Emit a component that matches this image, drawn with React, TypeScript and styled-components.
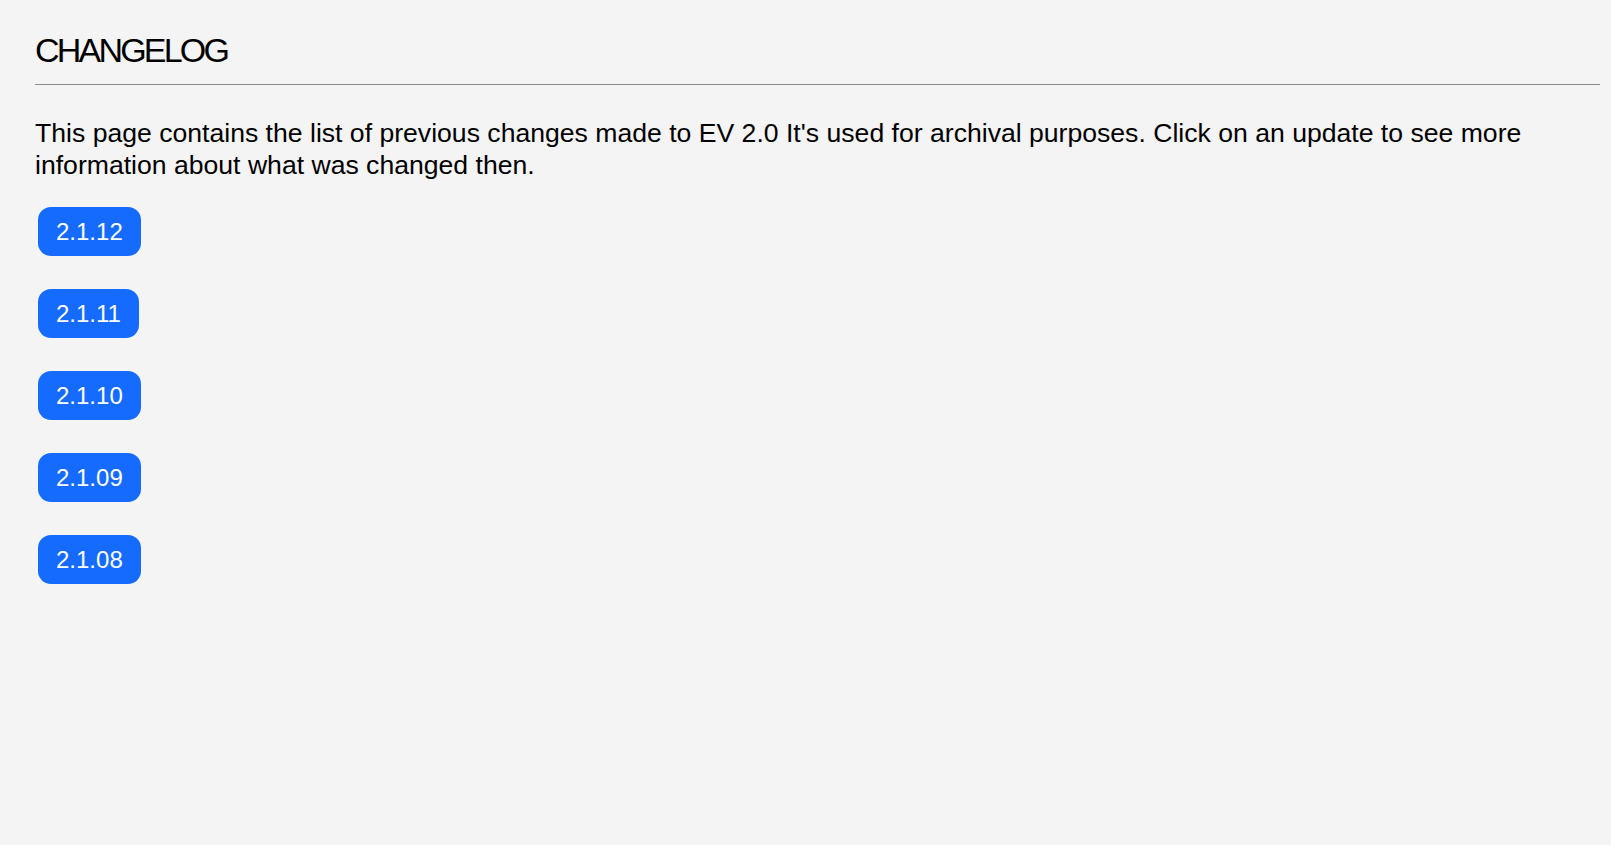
import styled, { createGlobalStyle } from "styled-components";

const GlobalStyle = createGlobalStyle`
  html, body {
    margin: 0;
    padding: 0;
    background: #f4f4f4;
  }
`;

const Page = styled.div`
  padding: 27px 11px 40px 35px;
  font-family: "Liberation Sans", Arial, sans-serif;
  color: #000;
`;

const Title = styled.h1`
  margin: 0;
  padding-bottom: 11px;
  border-bottom: 1px solid #8a8a8a;
  font-size: 34px;
  font-weight: 400;
  letter-spacing: -2.8px;
  line-height: 46px;
`;

const Intro = styled.p`
  margin: 32px 0 26px;
  font-size: 26.6px;
  line-height: 32px;
`;

const Versions = styled.div`
  display: flex;
  flex-direction: column;
  align-items: flex-start;
  gap: 33px;
  padding-left: 3px;
`;

const VersionButton = styled.button`
  height: 49px;
  padding: 0 18px;
  border: none;
  border-radius: 13px;
  background: #166bff;
  color: #fff;
  font-family: "Liberation Sans", Arial, sans-serif;
  font-size: 24px;
  cursor: pointer;
`;

const versions = ["2.1.12", "2.1.11", "2.1.10", "2.1.09", "2.1.08"];

const App = () => (
  <>
    <GlobalStyle />
    <Page>
      <Title>CHANGELOG</Title>
      <Intro>
        This page contains the list of previous changes made to EV 2.0 It's used for archival
        purposes. Click on an update to see more information about what was changed then.
      </Intro>
      <Versions>
        {versions.map((v) => (
          <VersionButton key={v}>{v}</VersionButton>
        ))}
      </Versions>
    </Page>
  </>
);

export default App;
